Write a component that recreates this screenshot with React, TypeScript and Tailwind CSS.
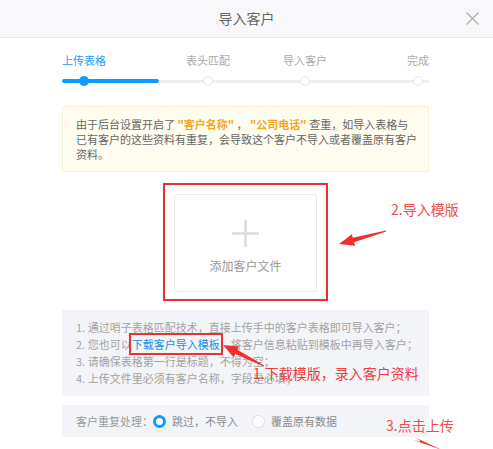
import React from "react";

const font = { fontFamily: '"Noto Sans CJK SC", "Noto Sans", sans-serif' };

// tapered annotation arrow from tail to tip
function arrowPoints(tx: number, ty: number, hx: number, hy: number, head = 14, wing = 6, shaft = 2.2) {
  const dx = hx - tx;
  const dy = hy - ty;
  const len = Math.hypot(dx, dy);
  const ux = dx / len;
  const uy = dy / len;
  const nx = -uy;
  const ny = ux;
  const bx = hx - ux * head;
  const by = hy - uy * head;
  const p = (x: number, y: number) => `${x.toFixed(1)},${y.toFixed(1)}`;
  return [
    p(tx + nx * 0.4, ty + ny * 0.4),
    p(bx + nx * shaft, by + ny * shaft),
    p(bx + nx * wing, by + ny * wing),
    p(hx, hy),
    p(bx - nx * wing, by - ny * wing),
    p(bx - nx * shaft, by - ny * shaft),
    p(tx - nx * 0.4, ty - ny * 0.4),
  ].join(" ");
}

const steps = [
  { label: "上传表格", ml: "ml-0", active: true },
  { label: "表头匹配", ml: "ml-[80px]", active: false },
  { label: "导入客户", ml: "ml-[53px]", active: false },
  { label: "完成", ml: "ml-[69px]", active: false },
];

export default function App() {
  return (
    <div className="relative w-[493px] h-[449px] overflow-hidden bg-white" style={font}>
      {/* header */}
      <div className="relative h-[38px] bg-[#f8f8fa] border-b border-[#e9e9ec] flex items-center justify-center">
        <span className="text-[14px] text-[#666]">导入客户</span>
        <svg className="absolute right-[14px] top-[12px]" width="13" height="13" viewBox="0 0 13 13">
          <path d="M0.5 0.5 L12.5 12.5 M12.5 0.5 L0.5 12.5" stroke="#aaa" strokeWidth="1.1" />
        </svg>
      </div>

      <div className="ml-[62px] w-[367px]">
        {/* steps */}
        <div className="relative mt-[15px]">
          <div className="absolute left-0 right-0 top-[26.5px] h-[3px] bg-[#efefef]" />
          <div className="absolute left-0 top-[26px] h-[4px] w-[97px] rounded-full bg-[#0e9bff]" />
          <div className="relative flex">
            {steps.map((s) => (
              <div key={s.label} className={`${s.ml} w-[44px] shrink-0 flex flex-col items-center`}>
                <div className={`text-[11px] leading-[15px] whitespace-nowrap ${s.active ? "text-[#1a9cff]" : "text-[#aaa]"}`}>
                  {s.label}
                </div>
                <div
                  className={`mt-[8px] w-[10px] h-[10px] rounded-full ${
                    s.active ? "bg-[#0e9bff]" : "bg-white border-[1.5px] border-[#e4e4e4]"
                  }`}
                />
              </div>
            ))}
          </div>
        </div>

        {/* notice */}
        <div className="mt-[20px] h-[66px] bg-[#fffdf0] border border-[#f6f0d6] pl-[13px] pt-[10px] text-[11px] leading-[15px] text-[#666] whitespace-nowrap">
          <div>
            由于后台设置开启了 <span className="text-[#f7a51c] font-bold">"客户名称"</span> ， <span className="text-[#f7a51c] font-bold">"公司电话"</span> 查重，如导入表格与
          </div>
          <div>已有客户的这些资料有重复，会导致这个客户不导入或者覆盖原有客户</div>
          <div>资料。</div>
        </div>

        {/* upload */}
        <div className="mt-[22px] mx-auto w-[143px] h-[98px] border border-[#ebebeb] rounded-[2px] flex flex-col items-center pt-[25px]">
          <svg width="27" height="27" viewBox="0 0 27 27">
            <path d="M13.5 0 V27 M0 13.5 H27" stroke="#dcdcdc" strokeWidth="2.6" />
          </svg>
          <div className="mt-[11px] text-[12px] leading-[16px] text-[#999]">添加客户文件</div>
        </div>

        {/* tips */}
        <div className="mt-[18px] h-[86px] bg-[#f3f4f8] pl-[14px] py-[9px] text-[11px] leading-[17px] text-[#a3a3a3] whitespace-nowrap">
          <div>1. 通过哨子表格匹配技术，直接上传手中的客户表格即可导入客户；</div>
          <div>
            2. 您也可以
            <span className="text-[#1a8cf0] outline-2 outline-solid outline-[#e83232] outline-offset-[1px]">下载客户导入模板</span>
            ，将客户信息粘贴到模板中再导入客户；
          </div>
          <div>3. 请确保表格第一行是标题，不得为空；</div>
          <div>4. 上传文件里必须有客户名称，字段是必填；</div>
        </div>

        {/* duplicate handling */}
        <div className="mt-[9px] h-[32px] bg-[#f3f4f8] pl-[14px] flex items-center text-[11px] text-[#999] whitespace-nowrap">
          <span>客户重复处理：</span>
          <span className="w-[13px] h-[13px] rounded-full border-[3.5px] border-[#0e9bff] bg-white" />
          <span className="ml-[6px] text-[#8c8c8c]">跳过，不导入</span>
          <span className="ml-[14px] w-[13px] h-[13px] rounded-full border border-[#dedede] bg-white" />
          <span className="ml-[6px] text-[#8c8c8c]">覆盖原有数据</span>
        </div>
      </div>

      {/* annotations */}
      <div className="absolute left-[163px] top-[183px] w-[165px] h-[118px] border-2 border-[#e83232] pointer-events-none" />
      <div className="absolute left-[391px] top-[199px] text-[14px] leading-[20px] text-[#f34a4a] whitespace-nowrap">2.导入模版</div>
      <div className="absolute left-[253px] top-[363px] text-[14px] leading-[20px] text-[#f03c3c] whitespace-nowrap">1.下载模版，录入客户资料</div>
      <div className="absolute left-[386px] top-[415px] text-[14px] leading-[20px] text-[#f34a4a] whitespace-nowrap">3.点击上传</div>
      <svg className="absolute left-0 top-0 pointer-events-none" width="493" height="449" viewBox="0 0 493 449">
        <polygon points={arrowPoints(386, 231, 339, 244, 15, 6, 2.4)} fill="#f03030" />
        <polygon points={arrowPoints(264, 366, 223, 345, 15, 6, 2.4)} fill="#f03030" />
        <polygon points={arrowPoints(420, 441, 442, 450, 30, 1.6, 1.6)} fill="#f03030" />
      </svg>
    </div>
  );
}
